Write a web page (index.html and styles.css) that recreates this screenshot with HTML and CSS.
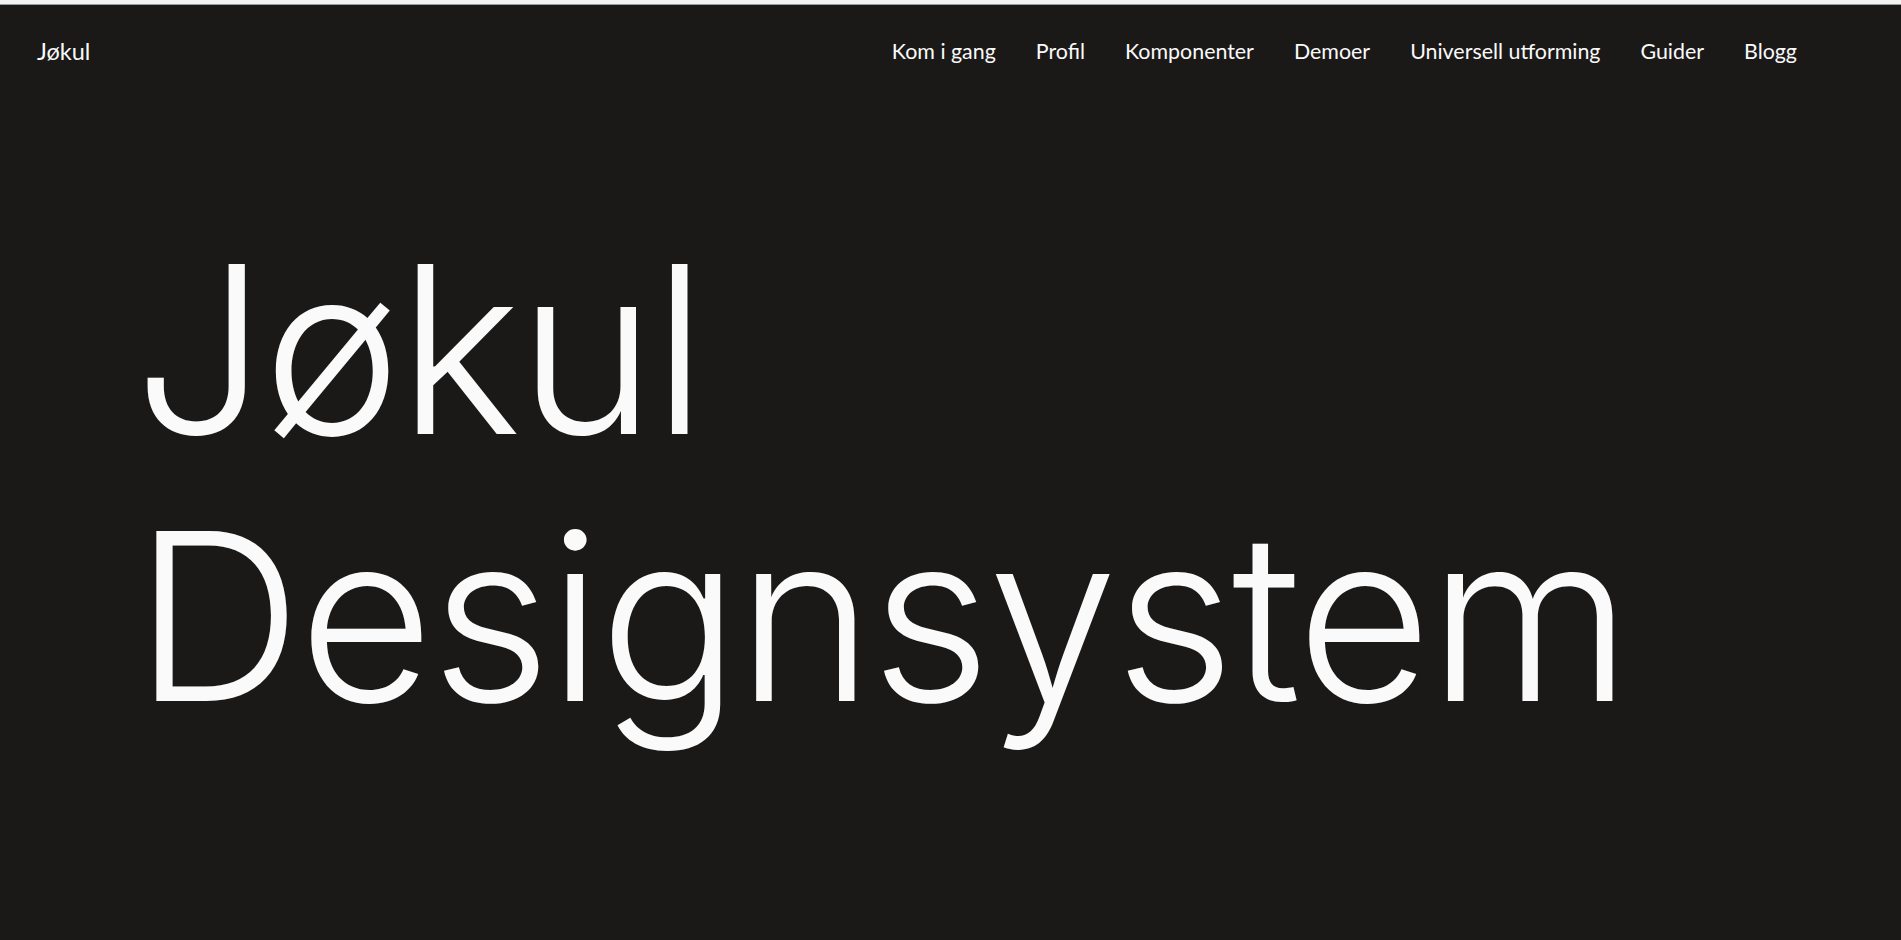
FILE: index.html
```html
<!DOCTYPE html>
<html lang="no">
<head>
<meta charset="utf-8">
<title>Jøkul Designsystem</title>
<link rel="stylesheet" href="styles.css">
</head>
<body>
<div class="topstrip"></div>
<header class="header">
  <a class="logo" href="#">Jøkul</a>
  <nav class="nav">
    <a href="#">Kom i gang</a>
    <a href="#">Profil</a>
    <a href="#">Komponenter</a>
    <a href="#">Demoer</a>
    <a href="#">Universell utforming</a>
    <a href="#">Guider</a>
    <a href="#">Blogg</a>
  </nav>
</header>
<main class="hero">
  <h1 class="title"><span class="line">Jøkul</span><span class="line">Designsystem</span></h1>
</main>
</body>
</html>
```

FILE: styles.css
```css
html, body {
  margin: 0;
  padding: 0;
  height: 100%;
}
body {
  background: #1b1918;
  color: #fafafa;
  font-family: Lato, "Noto Sans", sans-serif;
  overflow: hidden;
}
.topstrip {
  height: 4px;
  background: #f2f2f2;
  border-bottom: 1px solid #9a9a9a;
}
.header {
  display: flex;
  justify-content: space-between;
  align-items: center;
  padding: 34px 104px 0 37px;
  line-height: 24px;
}
.logo {
  color: #fafafa;
  text-decoration: none;
  font-size: 23.5px;
}
.nav {
  display: flex;
  gap: 40px;
}
.nav a {
  color: #fafafa;
  text-decoration: none;
  font-size: 21.4px;
}
.hero {
  padding: 153px 0 0 134px;
}
.title {
  margin: 0;
  font-family: Inter, Lato, sans-serif;
  font-weight: 300;
  font-size: 233px;
  line-height: 267px;
  letter-spacing: -3px;
}
.line {
  display: block;
}
```
